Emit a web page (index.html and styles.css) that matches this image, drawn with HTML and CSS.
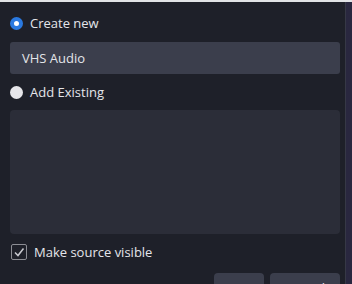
FILE: index.html
```html
<!DOCTYPE html>
<html lang="en">
<head>
  <meta charset="UTF-8" />
  <title>Select Source</title>
  <link rel="stylesheet" href="styles.css">
</head>
<body>
  <div class="topline"></div>
  <div class="window">
    <div class="dialog">
      <label class="option">
        <span class="radio checked"></span>
        <span>Create new</span>
      </label>
      <div class="name-input">VHS Audio</div>
      <label class="option">
        <span class="radio"></span>
        <span>Add Existing</span>
      </label>
      <div class="source-list"></div>
      <label class="check-row">
        <span class="checkbox">
          <svg width="12" height="12" viewBox="0 0 12 12">
            <polyline points="2,6.5 5,9.5 10.5,2.5" fill="none" stroke="#c8c9cf" stroke-width="1.5" />
          </svg>
        </span>
        <span>Make source visible</span>
      </label>
      <div class="buttons">
        <button class="btn ok">OK</button>
        <button class="btn cancel">Cancel</button>
      </div>
    </div>
    <div class="edge"></div>
  </div>
</body>
</html>
```

FILE: styles.css
```css
body {
  margin: 0;
  width: 352px;
  height: 284px;
  overflow: hidden;
  background-color: #1e2029;
  color: #e4e5ea;
  font-family: 'Open Sans', 'Noto Sans', sans-serif;
  font-size: 13px;
}
.topline {
  height: 2px;
  background-color: #e2e3e6;
}
.window {
  display: flex;
  height: 282px;
}
.dialog {
  flex: 1;
  padding: 12px 5px 0 10px;
}
.edge {
  width: 6px;
  border-left: 1px solid #363846;
  background-color: #29273f;
}
.option {
  display: flex;
  align-items: center;
  gap: 7px;
  height: 18px;
}
.radio {
  width: 13px;
  height: 13px;
  border-radius: 50%;
  background-color: #e6e6ea;
  box-sizing: border-box;
}
.radio.checked {
  background-color: #2a79e0;
  border: 4px solid #2a79e0;
  background-clip: padding-box;
  box-shadow: inset 0 0 0 3px #ffffff;
  background: #ffffff;
}
.name-input {
  margin: 10px 0 9px;
  height: 32px;
  line-height: 32px;
  padding: 0 12px;
  background-color: #3b3e4c;
  border-radius: 3px;
}
.source-list {
  margin-top: 9px;
  height: 124px;
  background-color: #2b2d38;
  border-radius: 4px;
}
.check-row {
  display: flex;
  align-items: center;
  gap: 7px;
  margin-top: 9px;
  height: 18px;
  padding-left: 1px;
}
.checkbox {
  width: 14px;
  height: 14px;
  border: 1px solid #8c8d94;
  border-radius: 2px;
  display: flex;
  align-items: center;
  justify-content: center;
}
.buttons {
  display: flex;
  justify-content: flex-end;
  gap: 6px;
  margin-top: 12px;
}
.btn {
  height: 30px;
  border: none;
  border-radius: 4px;
  background-color: #3b3e4c;
  color: #e4e5ea;
  font-family: inherit;
  font-size: 13px;
  padding: 0;
}
.ok {
  width: 50px;
}
.cancel {
  width: 70px;
}
```
